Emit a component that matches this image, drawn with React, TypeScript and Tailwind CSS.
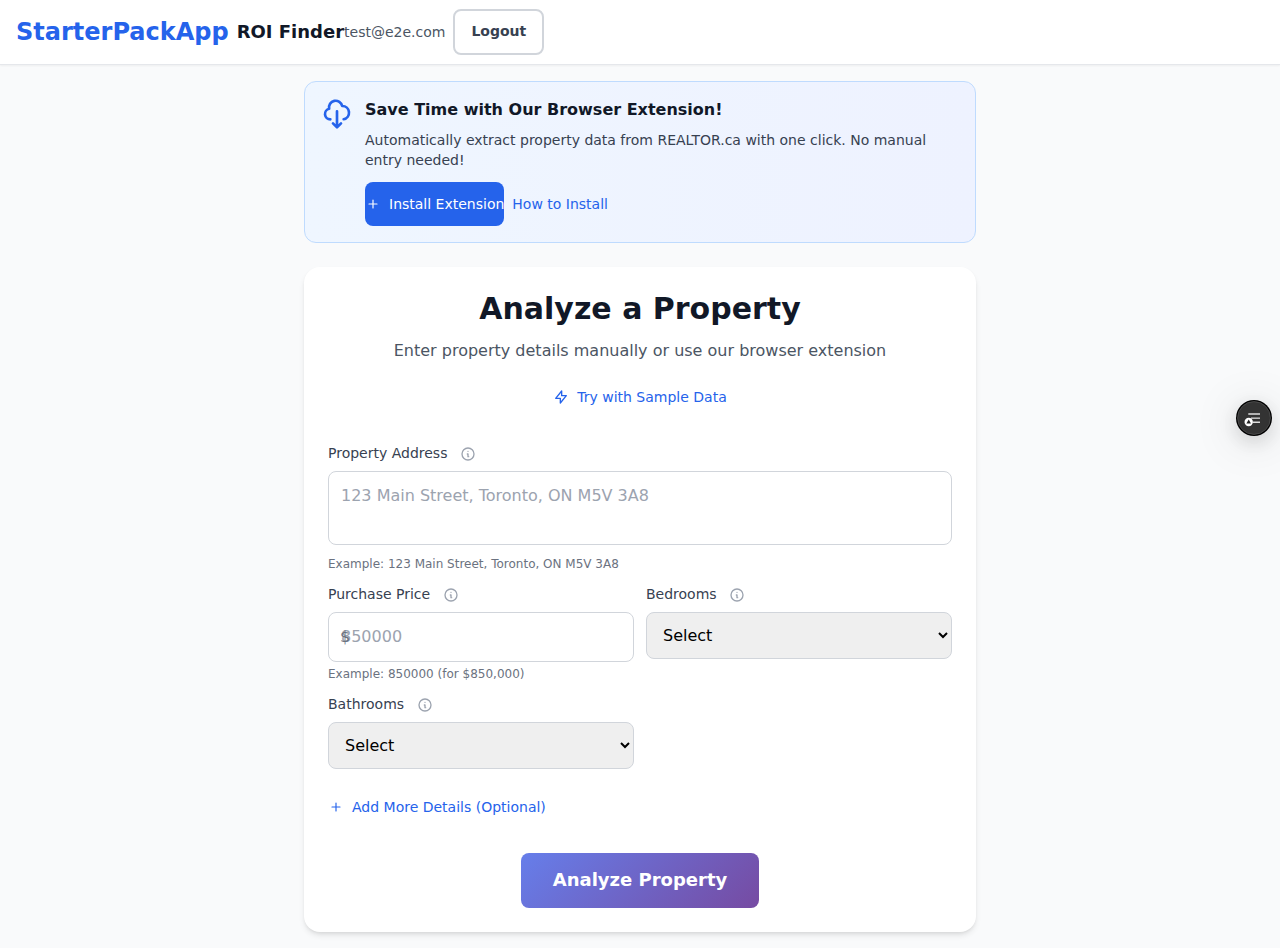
import React from 'react';

function Icon({ d, className, stroke = 2 }: { d: string; className: string; stroke?: number }) {
  return (
    <svg className={`shrink-0 ${className}`} fill="none" stroke="currentColor" strokeWidth={stroke} strokeLinecap="round" strokeLinejoin="round" viewBox="0 0 24 24">
      <path d={d} />
    </svg>
  );
}

const CLOUD = 'M7 16a4 4 0 01-.88-7.903A5 5 0 1115.9 6L16 6a5 5 0 011 9.9M9 19l3 3m0 0l3-3m-3 3V10';
const PLUS = 'M12 6v6m0 0v6m0-6h6m-6 0H6';
const BOLT = 'M13 10V3L4 14h7v7l9-11h-7z';
const INFO = 'M13 16h-1v-4h-1m1-4h.01M21 12a9 9 0 11-18 0 9 9 0 0118 0z';

function Label({ text }: { text: string }) {
  return (
    <div className="mb-2 flex h-5 items-center text-sm text-[#374151]">
      <label>{text}</label>
      <Icon d={INFO} className="ml-[12.45px] mt-0.5 size-4 text-[#9ca3af]" />
    </div>
  );
}

function SelectField({ label }: { label: string }) {
  return (
    <div>
      <Label text={label} />
      <select className="block h-[47px] w-full rounded-lg border border-[#d1d5db] bg-[#efefef] px-3 text-base text-black">
        <option>Select</option>
      </select>
    </div>
  );
}

export default function App() {
  return (
    <div className="h-[948px] overflow-hidden bg-[#f9fafb] font-['DejaVu_Sans',sans-serif] text-[#111827]">
      <header className="flex h-[65px] items-center border-b border-[#e5e7eb] bg-white px-4 shadow-[0_1px_2px_0_rgba(0,0,0,0.05)]">
        <span className="text-2xl font-bold text-[#2563eb]">StarterPackApp</span>
        <span className="ml-2 text-lg font-bold">ROI Finder</span>
        <span className="text-sm text-[#4b5563]">test@e2e.com</span>
        <button className="ml-2 h-[46px] rounded-lg border-2 border-[#d1d5db] bg-white px-4 pb-0.5 text-sm font-bold text-[#374151]">Logout</button>
      </header>

      <main className="mx-auto w-[672px] pt-4">
        <section className="flex gap-3 rounded-xl border border-[#bfdbfe] bg-[linear-gradient(to_right,#eff6ff,#eef2ff)] p-4">
          <Icon d={CLOUD} className="size-8 text-[#2563eb]" />
          <div>
            <h3 className="mb-2 text-base font-bold">Save Time with Our Browser Extension!</h3>
            <p className="mb-3 text-sm text-[#374151]">
              Automatically extract property data from REALTOR.ca with one click. No manual entry needed!
            </p>
            <div className="flex items-center gap-2 text-sm">
              <button className="flex h-11 items-center gap-2 rounded-lg bg-[#2563eb] text-white">
                <Icon d={PLUS} stroke={1.75} className="size-4" />
                Install Extension
              </button>
              <button className="text-[#2563eb]">How to Install</button>
            </div>
          </div>
        </section>

        <section className="mt-6 h-[665px] rounded-2xl bg-white p-6 shadow-[0_4px_6px_-1px_rgba(0,0,0,0.1),0_2px_4px_-2px_rgba(0,0,0,0.1)]">
          <div className="flex flex-col items-center">
            <h1 className="mb-3 text-3xl leading-9 font-bold">Analyze a Property</h1>
            <p className="mb-3 text-base text-[#4b5563]">Enter property details manually or use our browser extension</p>
            <button className="flex h-11 items-center gap-2 text-sm text-[#2563eb]">
              <Icon d={BOLT} className="size-4" />
              Try with Sample Data
            </button>
          </div>

          <div className="mt-6">
            <Label text="Property Address" />
            <textarea rows={2} placeholder="123 Main Street, Toronto, ON M5V 3A8" className="block h-[74px] w-full resize-none rounded-lg border border-[#d1d5db] p-3 text-base placeholder:text-[#9ca3af]" />
            <p className="mt-[11px] text-xs text-[#6b7280]">Example: 123 Main Street, Toronto, ON M5V 3A8</p>
          </div>

          <div className="mt-3 grid grid-cols-2 gap-3">
            <div>
              <Label text="Purchase Price" />
              <div className="relative">
                <input placeholder="850000" className="block h-[50px] w-full rounded-lg border border-[#d1d5db] bg-white px-3 pb-0.5 text-base placeholder:text-[#9ca3af]" />
                <span className="absolute top-[13px] left-3 text-base text-[#6b7280]">$</span>
              </div>
              <p className="mt-1 text-xs text-[#6b7280]">Example: 850000 (for $850,000)</p>
            </div>
            <SelectField label="Bedrooms" />
            <SelectField label="Bathrooms" />
          </div>

          <button className="mt-4 flex h-11 items-center gap-2 text-sm text-[#2563eb]">
            <Icon d={PLUS} stroke={1.75} className="size-4" />
            Add More Details (Optional)
          </button>

          <div className="mt-6 flex justify-center">
            <button className="h-[55px] rounded-lg bg-[linear-gradient(135deg,#667eea_0%,#764ba2_100%)] px-8 pb-0.5 text-lg font-bold text-white">Analyze Property</button>
          </div>
        </section>
      </main>

      <button className="fixed top-[400px] right-2 size-9 rounded-full shadow-[0_6px_48px_rgba(0,0,0,0.14),0_6px_20px_rgba(0,0,0,0.14)]">
        <svg viewBox="0 0 36 36" className="size-9">
          <circle cx="18" cy="18" r="18" fill="#000" />
          <circle cx="18" cy="18" r="16.4" fill="#333" stroke="#505050" strokeWidth="0.8" />
          <path d="M12.3 14H24M16.7 22.3H24" stroke="#ddd" strokeWidth="1.6" />
          <path d="M15 18.2H24" stroke="#bbb" strokeWidth="1.6" />
          <circle cx="12.7" cy="22" r="4.2" fill="#fff" />
          <path d="M12.7 19.5L15 23.5H10.4Z" fill="#222" />
        </svg>
      </button>
    </div>
  );
}
